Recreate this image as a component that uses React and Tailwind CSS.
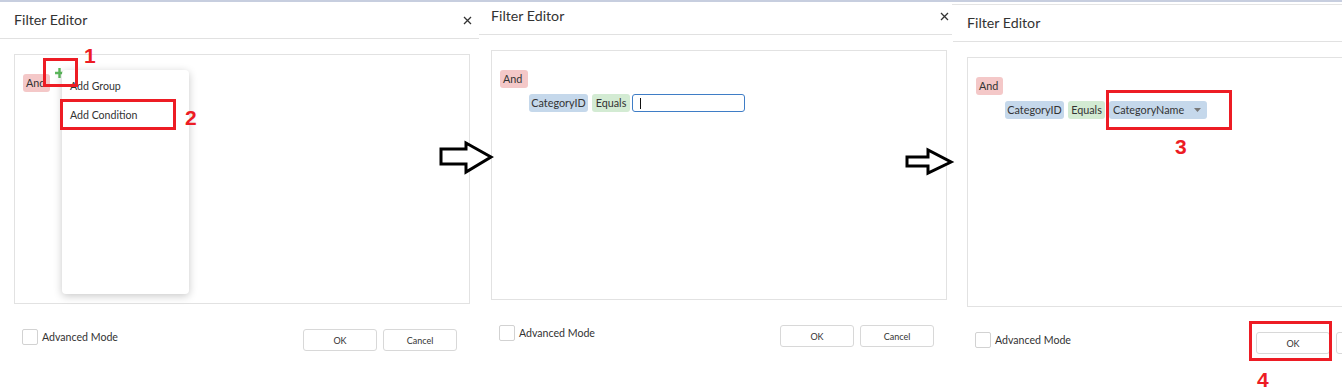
import React from "react";

function CloseX() {
  return (
    <svg width="9" height="9" viewBox="0 0 9 9" className="block">
      <path d="M1 1L8 8M8 1L1 8" stroke="#333" strokeWidth="1.3" fill="none" />
    </svg>
  );
}

function Badge({ children, color, className = "" }) {
  return (
    <span
      className={`inline-flex h-[18px] items-center rounded-[3px] px-[3px] text-[10.8px] leading-none text-[#333] ${color} ${className}`}
    >
      {children}
    </span>
  );
}

function Dialog({ shift, children }) {
  return (
    <div className={`w-[484px] ${shift}`}>
      <div className="flex h-[37px] items-center justify-between border-b border-[#e1e1e1] pl-[14px] pr-[12px]">
        <span className="text-[14.2px] text-[#333]">Filter Editor</span>
        <CloseX />
      </div>
      <div className="ml-[14px] mt-[15px] flex h-[250px] w-[456px] flex-col items-start border border-[#e2e2e2] pl-[8px] pt-[19px]">
        {children}
      </div>
      <div className="ml-[14px] mt-[25px] flex w-[456px] items-start pr-[13px]">
        <div className="ml-[8px] h-[16px] w-[16px] rounded-[2px] border border-[#d2d2d2]" />
        <span className="ml-[4px] text-[10.6px] leading-[16px] text-[#333]">Advanced Mode</span>
        <div className="ml-auto flex gap-[6px]">
          <button className="h-[22px] w-[74px] rounded-[3px] border border-[#d8d8d8] bg-white pt-[1px] text-[9px] text-[#333]">
            OK
          </button>
          <button className="h-[22px] w-[74px] rounded-[3px] border border-[#d8d8d8] bg-white pt-[1px] text-[9px] text-[#333]">
            Cancel
          </button>
        </div>
      </div>
    </div>
  );
}

function RedBox({ className }) {
  return <div className={`pointer-events-none absolute border-[3px] border-[#ed1c24] ${className}`} />;
}

function Num({ children, className }) {
  return (
    <span
      className={`absolute font-['Liberation_Sans',Arial,sans-serif] text-[21px] font-bold leading-none text-[#ed1c24] ${className}`}
    >
      {children}
    </span>
  );
}

export default function App() {
  return (
    <div className="relative h-[392px] w-[1342px] overflow-hidden bg-white font-['Lato',sans-serif] text-[#333]">
      <div className="h-[2px] bg-[#c7cedf]" />
      <div className="flex">
        {/* Panel 1 */}
        <div className="relative w-[479px] shrink-0 overflow-hidden">
          <Dialog shift="">
            <div className="flex items-start">
              <Badge color="bg-[#f4c8c8]" className="w-[27px]">And</Badge>
              <svg width="9" height="10" viewBox="0 0 9 10" className="ml-[5px] mt-[-6px] block">
                <path d="M4.5 0V10M0 5H9" stroke="#5cb85c" strokeWidth="2.4" fill="none" />
              </svg>
            </div>
          </Dialog>
        </div>
        {/* Panel 2 */}
        <div className="relative w-[473px] shrink-0 overflow-hidden">
          <Dialog shift="-ml-[2px] -mt-[4px]">
            <Badge color="bg-[#f4c8c8]" className="w-[28px]">And</Badge>
            <div className="ml-[29px] mt-[6px] flex items-center">
              <Badge color="bg-[#c5d8eb]" className="w-[59px] justify-center">CategoryID</Badge>
              <Badge color="bg-[#d3ebd3]" className="ml-[4px] w-[38px] justify-center">Equals</Badge>
              <div className="ml-[2px] flex h-[18px] w-[113px] items-center rounded-[3px] border border-[#3f7dc6] pl-[7px]">
                <div className="h-[11px] w-[1px] bg-[#111]" />
              </div>
            </div>
          </Dialog>
        </div>
        {/* Panel 3 */}
        <div className="relative flex-1 overflow-hidden pt-[2px]">
          <div className="border-t border-[#e4e4e4]">
            <Dialog shift="ml-[1px]">
              <Badge color="bg-[#f4c8c8]" className="w-[27px]">And</Badge>
              <div className="ml-[29px] mt-[6px] flex items-center">
                <Badge color="bg-[#c5d8eb]" className="w-[59px] justify-center">CategoryID</Badge>
                <Badge color="bg-[#d3ebd3]" className="ml-[4px] w-[37px] justify-center">Equals</Badge>
                <div className="ml-[4px] flex h-[18px] w-[98px] items-center justify-between rounded-[3px] bg-[#c5d8eb] pl-[4px] pr-[6px] text-[10.8px] leading-none text-[#333]">
                  <span>CategoryName</span>
                  <svg width="7" height="4" viewBox="0 0 7 4" className="block">
                    <path d="M0 0H7L3.5 4Z" fill="#777" />
                  </svg>
                </div>
              </div>
            </Dialog>
          </div>
        </div>
      </div>

      {/* Context menu over panel 1 */}
      <div className="absolute left-[62px] top-[70px] h-[224px] w-[127px] rounded-[4px] bg-white pt-[2px] shadow-[0_2px_8px_rgba(0,0,0,0.22)]">
        <div className="flex h-[29px] items-center pl-[8px] text-[10.6px] text-[#333]">Add Group</div>
        <div className="flex h-[29px] items-center pl-[8px] text-[10.6px] text-[#333]">Add Condition</div>
      </div>

      {/* Arrows */}
      <svg className="absolute left-[436px] top-[138px]" width="60" height="40" viewBox="0 0 60 40">
        <polygon
          points="5,11 30,11 30,5 55,19 30,34 30,26 5,26"
          fill="white"
          stroke="black"
          strokeWidth="3"
          strokeLinejoin="miter"
        />
      </svg>
      <svg className="absolute left-[902px] top-[144px]" width="55" height="36" viewBox="0 0 55 36">
        <polygon
          points="5,13 26,13 26,6 49,18 26,29 26,22 5,22"
          fill="white"
          stroke="black"
          strokeWidth="3"
          strokeLinejoin="miter"
        />
      </svg>

      {/* Annotations */}
      <RedBox className="left-[43px] top-[58px] h-[29px] w-[35px]" />
      <Num className="left-[84px] top-[45px]">1</Num>
      <RedBox className="left-[60px] top-[99px] h-[31px] w-[116px]" />
      <Num className="left-[185px] top-[107px]">2</Num>
      <RedBox className="left-[1106px] top-[90px] h-[40px] w-[126px]" />
      <Num className="left-[1175px] top-[136px]">3</Num>
      <RedBox className="left-[1249px] top-[321px] h-[40px] w-[83px]" />
      <Num className="left-[1257px] top-[369px]">4</Num>
    </div>
  );
}
